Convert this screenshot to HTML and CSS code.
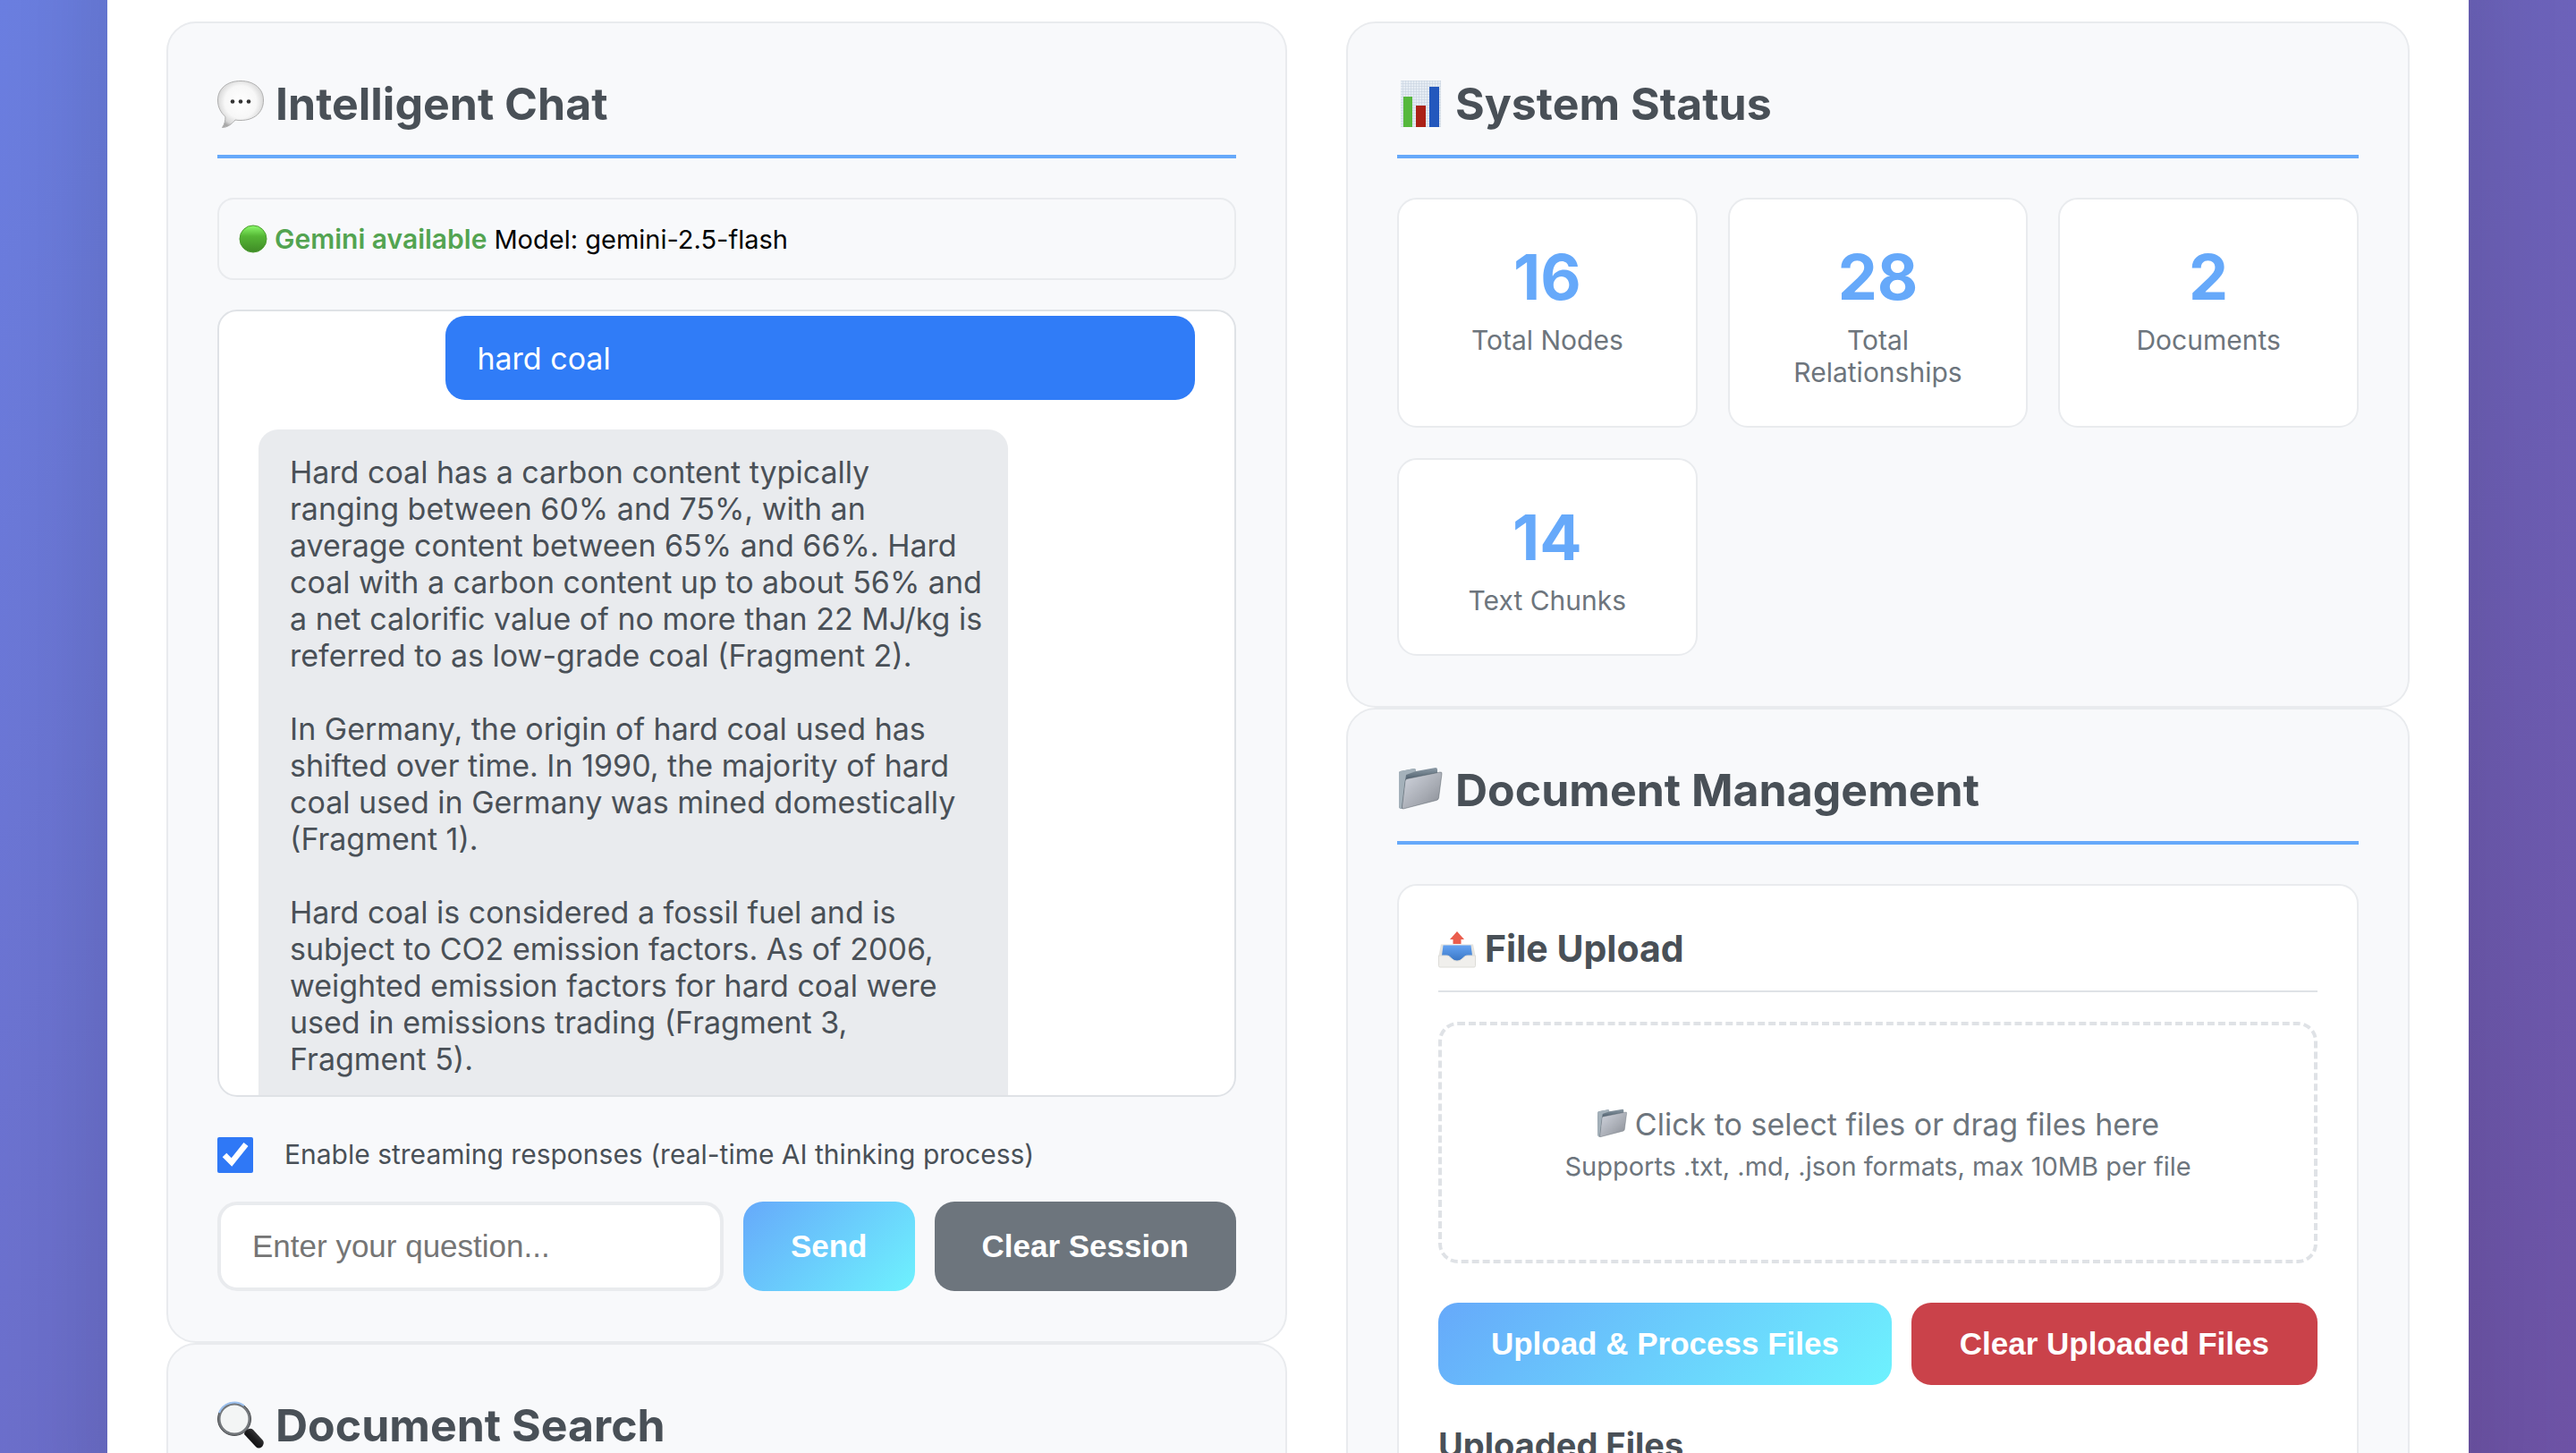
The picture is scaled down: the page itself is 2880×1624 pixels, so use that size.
FILE: index.html
```html
<!DOCTYPE html>
<html lang="en">
<head>
<meta charset="utf-8">
<title>Knowledge Graph Assistant</title>
<link rel="stylesheet" href="styles.css">
</head>
<body>
<svg class="defs" aria-hidden="true">
  <defs>
    <radialGradient id="bubble-fill" cx="0.5" cy="0.45" r="0.58">
      <stop offset="0" stop-color="#ffffff"/><stop offset="0.6" stop-color="#f7f7f7"/><stop offset="0.88" stop-color="#d6d6d6"/><stop offset="1" stop-color="#a8a8a8"/>
    </radialGradient>
    <linearGradient id="green-fill" x1="0" y1="0" x2="0" y2="1">
      <stop offset="0" stop-color="#8cfb6c"/><stop offset="0.4" stop-color="#55b635"/><stop offset="1" stop-color="#3f8a26"/>
    </linearGradient>
    <linearGradient id="folder-front" x1="0" y1="0" x2="1" y2="1">
      <stop offset="0" stop-color="#d3d7e0"/><stop offset="0.6" stop-color="#a7abb3"/><stop offset="1" stop-color="#868a92"/>
    </linearGradient>
    <linearGradient id="folder-back" x1="0" y1="0" x2="0" y2="1">
      <stop offset="0" stop-color="#8e9ca7"/><stop offset="0.3" stop-color="#4c5d6b"/><stop offset="1" stop-color="#7b8893"/>
    </linearGradient>
    <linearGradient id="tray-inner" x1="0" y1="0" x2="0" y2="1">
      <stop offset="0" stop-color="#64a3f3"/><stop offset="1" stop-color="#3a76c4"/>
    </linearGradient>
    <linearGradient id="handle-fill" x1="0" y1="1" x2="1" y2="0">
      <stop offset="0" stop-color="#000"/><stop offset="0.5" stop-color="#1c1c1e"/><stop offset="1" stop-color="#5a5a5a"/>
    </linearGradient>
    <pattern id="chart-grid" width="3" height="3" patternUnits="userSpaceOnUse">
      <path d="M0 0H3M0 0V3" stroke="#c3d0dd" stroke-width="1"/>
    </pattern>
    <symbol id="folder" viewBox="0 0 52 52">
      <path d="M2 7Q2 5.500 3.500 5L19 2Q20.500 2 21 3.500V5L43 1Q45 1 45 3V30L5 47Q2 47 2 44Z" fill="url(#folder-back)"/>
      <path d="M2 7Q2 5.500 3.500 5L19 2Q20.500 2 21 3.500V5L10 9L5 47Q2 47 2 44Z" fill="#a4b1ba"/>
      <path d="M9 16Q9 14 11 13.500L48 6Q50.500 5.500 50 8L46.500 35Q46 37 44 37.500L7 47Q5 47.500 5.500 45Z" fill="url(#folder-front)" stroke="#3f4a53" stroke-opacity=".4"/>
    </symbol>
  </defs>
</svg>
<main class="container">
  <div class="column">
    <section class="card">
      <h2 class="card-title">
        <svg class="icon" viewBox="0 0 52 52" aria-hidden="true"><path d="M26 .500C41 .500 51.500 9 51.500 22C51.500 36 41 44.500 26 44.500C24 44.500 22 44.500 20 44C16 49 11 52.500 5.500 52.500C8 49 9 45 9 40.500C4 36 .500 30 .500 22C.500 9 11 .500 26 .500Z" fill="url(#bubble-fill)" stroke="#b0b0b0"/><circle cx="17" cy="23.500" r="2.300" fill="#333"/><circle cx="26" cy="23.500" r="2.300" fill="#333"/><circle cx="35" cy="23.500" r="2.300" fill="#333"/></svg>
        <span>Intelligent Chat</span>
      </h2>
      <div class="model-status">
        <svg class="icon-dot" viewBox="0 0 32 32" aria-hidden="true"><circle cx="16" cy="16" r="15" fill="url(#green-fill)" stroke="#4c9c30"/></svg>
        <span class="available">Gemini available</span>
        <span class="model">Model: gemini-2.5-flash</span>
      </div>
      <div class="messages">
        <div class="message user">hard coal</div>
        <div class="message assistant">Hard coal has a carbon content typically
ranging between 60% and 75%, with an
average content between 65% and 66%. Hard
coal with a carbon content up to about 56% and
a net calorific value of no more than 22 MJ/kg is
referred to as low-grade coal (Fragment 2).

In Germany, the origin of hard coal used has
shifted over time. In 1990, the majority of hard
coal used in Germany was mined domestically
(Fragment 1).

Hard coal is considered a fossil fuel and is
subject to CO2 emission factors. As of 2006,
weighted emission factors for hard coal were
used in emissions trading (Fragment 3,
Fragment 5).</div>
      </div>
      <label class="streaming"><input type="checkbox" class="check" checked><span>Enable streaming responses (real-time AI thinking process)</span></label>
      <form class="ask">
        <input type="text" class="question" placeholder="Enter your question..." aria-label="Question">
        <button type="button" class="button primary">Send</button>
        <button type="button" class="button secondary">Clear Session</button>
      </form>
    </section>
    <section class="card">
      <h2 class="card-title">
        <svg class="icon" viewBox="0 0 52 52" aria-hidden="true"><path d="M30 36Q30 32 35 30Q38 29 40 31L51 43Q53 46 50 50Q46 53 43 50Z" fill="url(#handle-fill)"/><circle cx="19" cy="19" r="17" fill="#f3f5f5" stroke="#74787c" stroke-width="3"/><circle cx="19" cy="19" r="18.500" fill="none" stroke="#4a4d50" stroke-width="1"/><path d="M2 12A18.500 18.500 0 0 1 30 4" fill="none" stroke="#9dc2f0" stroke-width="2"/></svg>
        <span>Document Search</span>
      </h2>
    </section>
  </div>
  <div class="column">
    <section class="card">
      <h2 class="card-title">
        <svg class="icon" viewBox="0 0 52 52" aria-hidden="true"><rect x="4" width="45" height="52" fill="#e6edf4"/><rect x="4" width="45" height="52" fill="url(#chart-grid)"/><rect x="7" y="18" width="10" height="34" fill="#56b83d"/><rect x="21" y="28" width="11" height="24" fill="#ab2117"/><rect x="36" y="7" width="11" height="45" fill="#2358bd"/></svg>
        <span>System Status</span>
      </h2>
      <div class="stats">
        <div class="stat"><div class="number">16</div><div class="label">Total Nodes</div></div>
        <div class="stat"><div class="number">28</div><div class="label">Total Relationships</div></div>
        <div class="stat"><div class="number">2</div><div class="label">Documents</div></div>
        <div class="stat"><div class="number">14</div><div class="label">Text Chunks</div></div>
      </div>
    </section>
    <section class="card">
      <h2 class="card-title">
        <svg class="icon" aria-hidden="true"><use href="#folder"/></svg>
        <span>Document Management</span>
      </h2>
      <div class="panel">
        <h3 class="panel-title">
          <svg class="icon-tray" viewBox="0 0 42 42" aria-hidden="true"><path d="M21 1L29 10H25.500V15H16.500V10H13Z" fill="#ea5d4d"/><path d="M3 15.500H39L41.500 28H.500Z" fill="#e4e3df"/><path d="M5.500 16.500H36.500L38 28L28 34H14L4 28Z" fill="url(#tray-inner)"/><path d="M.500 28H9.500C14 28 15 34 21 34C27 34 28 28 32.500 28H41.500V39.500Q41.500 41 40 41H2Q.500 41 .500 39.500Z" fill="#f0efec" stroke="#dddcd8"/></svg>
          <span>File Upload</span>
        </h3>
        <button type="button" class="dropzone">
          <span class="drop-main"><svg class="icon-small" aria-hidden="true"><use href="#folder"/></svg>Click to select files or drag files here</span>
          <span class="drop-hint">Supports .txt, .md, .json formats, max 10MB per file</span>
        </button>
        <div class="actions">
          <button type="button" class="button primary upload">Upload &amp; Process Files</button>
          <button type="button" class="button danger">Clear Uploaded Files</button>
        </div>
        <h4 class="list-title">Uploaded Files</h4>
      </div>
    </section>
  </div>
</main>
</body>
</html>
```
FILE: styles.css
```css
* { box-sizing: border-box; }

body {
  margin: 0;
  height: 100vh;
  overflow: hidden;
  background: linear-gradient(135deg, #6b7fe1, #6e53a6);
  font-family: Inter, "Liberation Sans", sans-serif;
  font-size: 34px;
  line-height: 41px;
  color: #000;
}

h2, h3, h4 { margin: 0; color: #495057; font-weight: 700; }

.defs { position: absolute; width: 0; height: 0; }

/* The sheet runs past both window edges so its shadow stays even along the sides. */
.container {
  display: grid;
  grid-template-columns: minmax(0, 1253fr) minmax(0, 1189fr);
  gap: 66px;
  max-width: 2640px;
  min-height: calc(100vh + 264px);
  margin: -132px auto 0;
  padding: 156px 66px 0;
  background: #fff;
  box-shadow: 0 0 132px rgba(0, 0, 0, 0.15);
}

.card {
  padding: 54px 55px 56px;
  background: #f8f9fb;
  border: 2px solid #e9ebee;
  border-radius: 33px;
}

.card-title {
  display: flex;
  align-items: center;
  gap: 13px;
  height: 97px;
  margin-bottom: 44px;
  padding-bottom: 22px;
  border-bottom: 4px solid #66a9fa;
  font-size: 50px;
  line-height: 64px;
}

.icon { width: 52px; height: 52px; flex: none; overflow: visible; }
.icon-dot { width: 32px; height: 32px; flex: none; }
.icon-tray { width: 42px; height: 42px; flex: none; }
.icon-small { width: 35px; height: 35px; flex: none; }

.model-status {
  display: flex;
  align-items: center;
  gap: 8px;
  height: 92px;
  margin-bottom: 33px;
  padding: 0 22px;
  border: 2px solid #e9ebee;
  border-radius: 18px;
  font-size: 30px;
}

.available { color: #53a451; font-weight: 600; }
.model { font-size: 29px; }

.messages {
  display: flex;
  flex-direction: column;
  gap: 33px;
  height: 880px;
  padding: 5px 44px 0;
  overflow: hidden;
  background: #fff;
  border: 2px solid #dfe2e6;
  border-radius: 22px;
}

.message {
  flex: none;
  width: 80%;
  padding: 27px 35px 26px;
  border-radius: 22px;
  white-space: pre;
}

.user { align-self: flex-end; background: #307cf7; color: #fff; }
.assistant { padding-bottom: 66px; background: #e9ebee; color: #495057; }

.streaming {
  display: flex;
  align-items: center;
  gap: 35px;
  height: 41px;
  margin: 44px 0 32px;
  color: #495057;
  font-size: 30px;
}

.check { width: 40px; height: 40px; margin: 0; accent-color: #2f78f6; }

.ask { display: flex; gap: 22px; }

.question {
  flex: 1;
  min-width: 0;
  height: 100px;
  padding: 0 35px;
  background: #fff;
  border: 4px solid #e9ebee;
  border-radius: 22px;
  font: 35px "Liberation Sans", Arial, sans-serif;
}

.question::placeholder { color: #757575; }

.button {
  padding: 0 53px;
  border: 0;
  border-radius: 22px;
  color: #fff;
  font: 700 35px "Liberation Sans", Arial, sans-serif;
}

.primary { background: linear-gradient(135deg, #66a9fa, #6ef2fe); }
.secondary { background: #6d757d; }
.danger { padding: 0 54px; background: #ca424a; }

.stats {
  display: grid;
  grid-template-columns: repeat(3, minmax(0, 1fr));
  gap: 34px;
}

.stat {
  padding: 45px 44px 42px;
  background: #fff;
  border: 2px solid #e9ebee;
  border-radius: 22px;
  text-align: center;
}

.number {
  margin-bottom: 10px;
  color: #66a9fa;
  font-size: 70px;
  font-weight: 700;
  line-height: 84px;
}

.label { color: #6d757d; font-size: 30px; line-height: 36px; }

.panel {
  padding: 44px;
  background: #fff;
  border: 2px solid #e9ebee;
  border-radius: 22px;
}

.panel-title {
  display: flex;
  align-items: center;
  gap: 10px;
  margin-bottom: 33px;
  padding-bottom: 20px;
  border-bottom: 2px solid #dfe2e6;
  font-size: 41px;
  line-height: 53px;
}

.dropzone {
  display: flex;
  flex-direction: column;
  align-items: center;
  justify-content: center;
  gap: 6px;
  width: 100%;
  height: 270px;
  margin-bottom: 44px;
  padding: 6px 0 0;
  background: #fff;
  border: 4px dashed #dfe2e6;
  border-radius: 22px;
  color: #6d757d;
  font-family: inherit;
}

.drop-main { display: flex; align-items: center; gap: 8px; font-size: 34px; line-height: 41px; }
.drop-hint { font-size: 29px; line-height: 41px; }

.actions { display: flex; gap: 22px; height: 92px; margin-bottom: 44px; }
.upload { flex: 1; }

.list-title { font-size: 38px; line-height: 46px; }
```
